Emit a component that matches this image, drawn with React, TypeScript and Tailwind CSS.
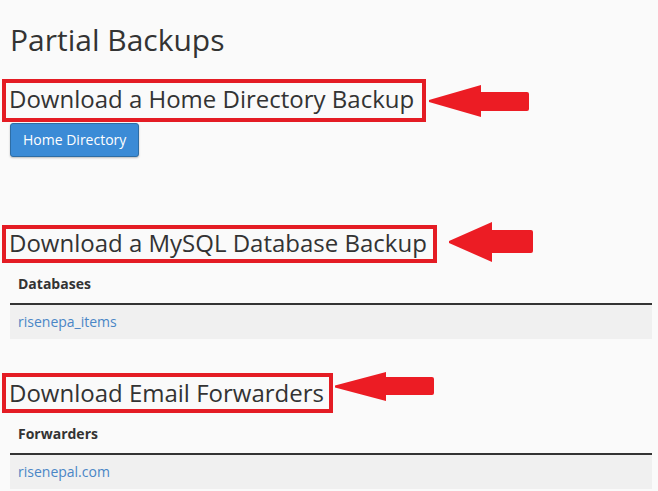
import React from 'react';

// 红色标注箭头
interface ArrowProps {
  w: number;
  h: number;
  headX: number;
  shaftTop: number;
  shaftBottom: number;
  className?: string;
}

function Arrow({ w, h, headX, shaftTop, shaftBottom, className }: ArrowProps) {
  const mid = h / 2;
  const d = `M0,${mid - 1} L${headX},0 L${headX},${shaftTop} L${w - 2},${shaftTop} Q${w},${shaftTop} ${w},${shaftTop + 2} L${w},${shaftBottom - 2} Q${w},${shaftBottom} ${w - 2},${shaftBottom} L${headX},${shaftBottom} L${headX},${h} L0,${mid + 1} Z`;
  return (
    <svg width={w} height={h} viewBox={`0 0 ${w} ${h}`} className={className}>
      <path d={d} fill="#ec1c24" />
    </svg>
  );
}

function Section({ children, className }: { children: React.ReactNode; className?: string }) {
  return (
    <div
      className={`-ml-[8px] inline-block border-4 border-[#e41c24] pl-[3px] text-[24px] leading-[28px] text-[#333333] ${className ?? ''}`}
    >
      {children}
    </div>
  );
}

function SimpleTable({ title, item }: { title: string; item: string }) {
  return (
    <div className="w-full">
      <div className="border-b-2 border-[#333333] px-[8px] pt-[11px] pb-[9px] text-[14px] leading-[20px] font-bold text-[#333333]">
        {title}
      </div>
      <div className="bg-[#f0f0f0] px-[8px] py-[7px] text-[14px] leading-[20px]">
        <a className="text-[#4a86c6]">{item}</a>
      </div>
    </div>
  );
}

export default function App() {
  return (
    <div
      className="min-h-screen overflow-hidden bg-[#fafafa] pl-[10px] pr-[6px] pt-[22px]"
      style={{ fontFamily: '"Open Sans", "Liberation Sans", sans-serif' }}
    >
      <h1 className="mb-[21px] text-[30px] leading-[36px] font-normal text-[#333333]">Partial Backups</h1>

      {/* 主目录 */}
      <div className="flex items-start">
        <Section className="pt-[2px] pb-[5px] pr-[8px]">Download a Home Directory Backup</Section>
        <Arrow w={100} h={32} headX={52} shaftTop={7} shaftBottom={26} className="mt-[6px] ml-[3px]" />
      </div>
      <button className="mt-[1px] rounded-[3px] border border-[#2e6da4] bg-[#3b8bd6] px-[12px] py-[6px] text-[14px] leading-[20px] text-white shadow-[0_1px_2px_rgba(0,0,0,0.25)]">
        Home Directory
      </button>

      {/* 数据库 */}
      <div className="mt-[68px] flex items-start">
        <Section className="pt-0 pb-[2px] pr-[6px]">Download a MySQL Database Backup</Section>
        <Arrow w={84} h={40} headX={43} shaftTop={8} shaftBottom={31} className="-mt-[3px] ml-[12px]" />
      </div>
      <SimpleTable title="Databases" item="risenepa_items" />

      {/* 邮件转发 */}
      <div className="mt-[34px] flex items-start">
        <Section className="pt-[2px] pb-[2px] pr-[5px]">Download Email Forwarders</Section>
        <Arrow w={99} h={29} headX={51} shaftTop={5} shaftBottom={23} className="-mt-[1px] ml-[2px]" />
      </div>
      <SimpleTable title="Forwarders" item="risenepal.com" />
    </div>
  );
}
